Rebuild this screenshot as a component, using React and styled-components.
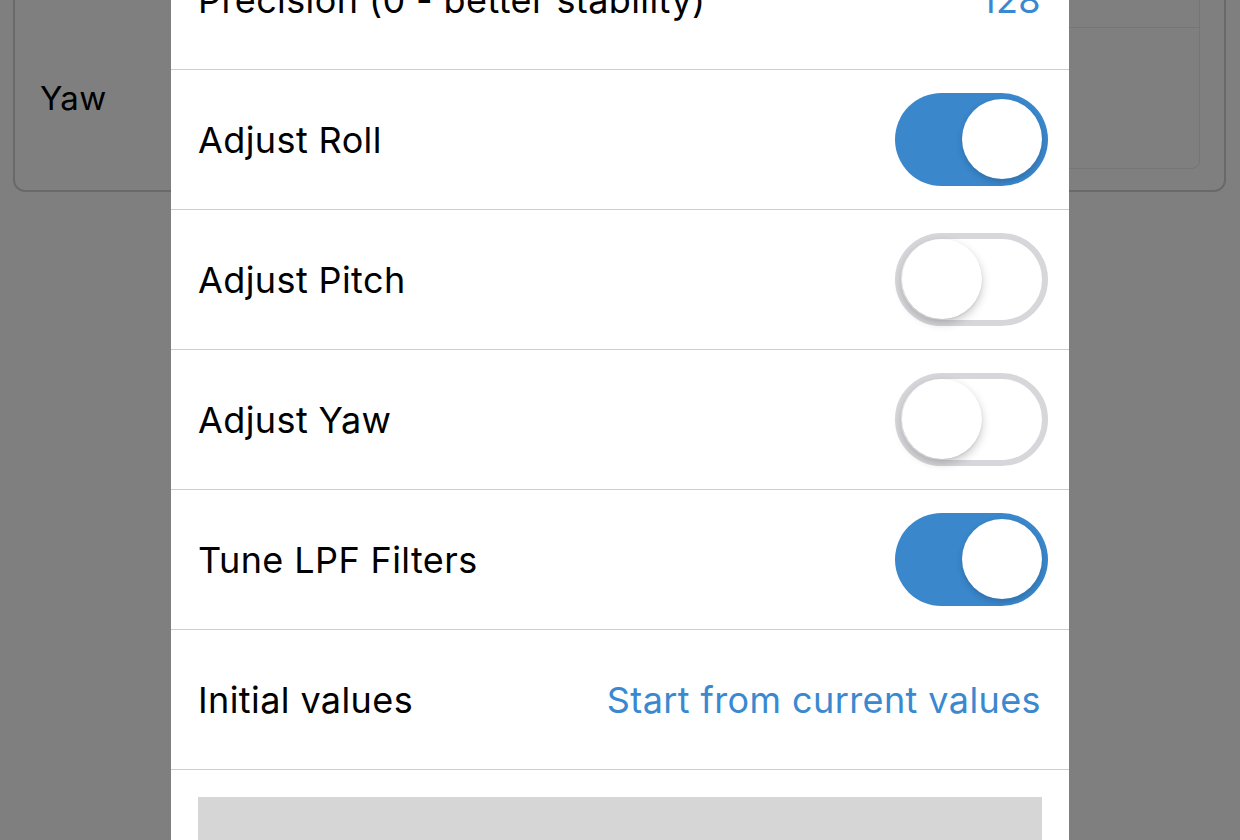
import React, { useState } from "react";
import styled, { createGlobalStyle } from "styled-components";

const GlobalStyle = createGlobalStyle`
  html, body {
    margin: 0;
    padding: 0;
    background: #ffffff;
    font-family: Inter, "Noto Sans", "Liberation Sans", sans-serif;
    overflow: hidden;
  }
`;

const Page = styled.div`
  width: 1240px;
  height: 840px;
  padding: 0 14px 0 13px;
  box-sizing: border-box;
`;

const Card = styled.div`
  margin-top: -220px;
  height: 412px;
  box-sizing: border-box;
  border: 2px solid #d2d2d2;
  border-radius: 12px;
  display: flex;
  flex-direction: column;
  justify-content: flex-end;
  padding: 0 24px 21px 25px;
`;

const AxisGrid = styled.div`
  display: grid;
  grid-template-columns: 200px 1fr;
`;

const AxisLabels = styled.div`
  display: flex;
  flex-direction: column;
`;

const AxisLabel = styled.div`
  height: 141px;
  display: flex;
  align-items: center;
  font-size: 33px;
  letter-spacing: 0.3px;
  color: #000;
`;

const AxisBox = styled.div`
  border: 1px solid #ebebeb;
  border-radius: 8px;
  display: flex;
  flex-direction: column;
`;

const AxisCell = styled.div`
  height: 140px;
  border-top: ${(p) => (p.first ? "none" : "1px solid #ebebeb")};
`;

const Overlay = styled.div`
  position: fixed;
  inset: 0;
  background: rgba(0, 0, 0, 0.5);
`;

const Sheet = styled.div`
  position: fixed;
  top: -70px;
  bottom: 0;
  left: 171px;
  width: 898px;
  background: #ffffff;
  display: flex;
  flex-direction: column;
`;

const Row = styled.div`
  height: 139px;
  flex: none;
  display: flex;
  align-items: center;
  justify-content: space-between;
  padding: 0 28px 0 27px;
  border-bottom: 1px solid #cfcfcf;
`;

const Label = styled.span`
  font-size: 36px;
  color: #000;
  letter-spacing: 0.4px;
`;

const Value = styled.span`
  font-size: 36px;
  color: #3a89d0;
  letter-spacing: 0.4px;
`;

const Track = styled.button`
  position: relative;
  width: 153px;
  height: 93px;
  margin-right: -7px;
  padding: 0;
  border-radius: 47px;
  box-sizing: border-box;
  cursor: pointer;
  border: ${(p) => (p.on ? "none" : "6px solid #d7d7db")};
  background: ${(p) => (p.on ? "#3a87cc" : "#ffffff")};
`;

const Knob = styled.span`
  position: absolute;
  top: ${(p) => (p.on ? "6px" : "0px")};
  left: ${(p) => (p.on ? "67px" : "1px")};
  width: 80px;
  height: 80px;
  border-radius: 50%;
  background: #ffffff;
  box-shadow: ${(p) =>
    p.on
      ? "0 3px 6px rgba(0,0,0,0.18)"
      : "0 4px 10px rgba(0,0,0,0.22), 0 1px 2px rgba(0,0,0,0.08)"};
`;

const Footer = styled.div`
  padding: 27px 27px 0 27px;
`;

const GrayBlock = styled.div`
  height: 80px;
  background: #d6d6d6;
`;

function Toggle({ on, onClick }) {
  return (
    <Track on={on ? 1 : 0} onClick={onClick}>
      <Knob on={on ? 1 : 0} />
    </Track>
  );
}

export default function App() {
  const [flags, setFlags] = useState({
    roll: true,
    pitch: false,
    yaw: false,
    lpf: true,
  });

  const flip = (key) => setFlags({ ...flags, [key]: !flags[key] });

  return (
    <>
      <GlobalStyle />
      <Page>
        <Card>
          <AxisGrid>
            <AxisLabels>
              <AxisLabel>Pitch</AxisLabel>
              <AxisLabel>Yaw</AxisLabel>
            </AxisLabels>
            <AxisBox>
              <AxisCell first />
              <AxisCell />
            </AxisBox>
          </AxisGrid>
        </Card>
      </Page>
      <Overlay />
      <Sheet>
        <Row>
          <Label>Precision (0 - better stability)</Label>
          <Value>128</Value>
        </Row>
        <Row>
          <Label>Adjust Roll</Label>
          <Toggle on={flags.roll} onClick={() => flip("roll")} />
        </Row>
        <Row>
          <Label>Adjust Pitch</Label>
          <Toggle on={flags.pitch} onClick={() => flip("pitch")} />
        </Row>
        <Row>
          <Label>Adjust Yaw</Label>
          <Toggle on={flags.yaw} onClick={() => flip("yaw")} />
        </Row>
        <Row>
          <Label>Tune LPF Filters</Label>
          <Toggle on={flags.lpf} onClick={() => flip("lpf")} />
        </Row>
        <Row>
          <Label>Initial values</Label>
          <Value>Start from current values</Value>
        </Row>
        <Footer>
          <GrayBlock />
        </Footer>
      </Sheet>
    </>
  );
}
